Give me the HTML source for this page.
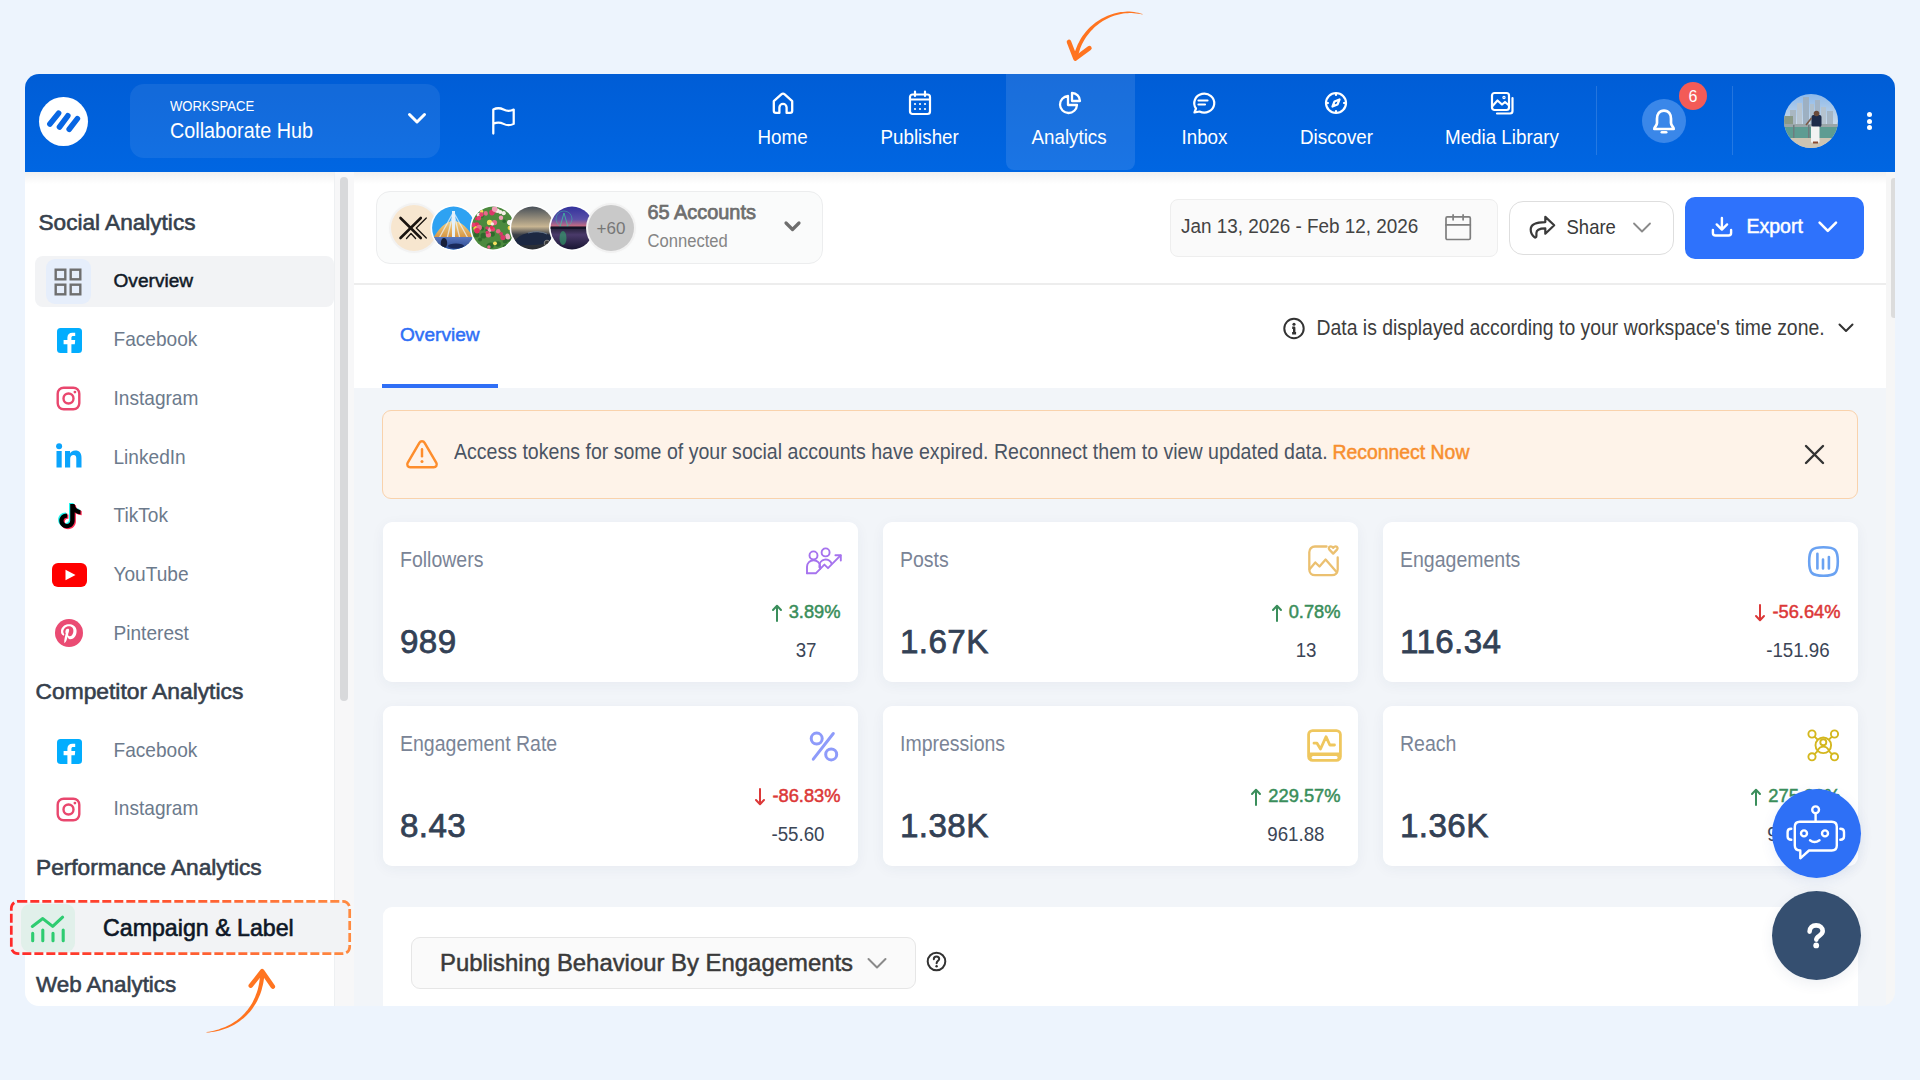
<!DOCTYPE html>
<html><head><meta charset="utf-8">
<style>
*{margin:0;padding:0;box-sizing:border-box}
html,body{width:1920px;height:1080px;overflow:hidden}
body{background:#EDF4FD;font-family:"Liberation Sans",sans-serif;position:relative}
.a{position:absolute}
.t{position:absolute;white-space:nowrap;line-height:1}
.m{-webkit-text-stroke:0.35px currentColor}
.s{transform:scaleY(1.1);transform-origin:0 84.65%}
svg{position:absolute;overflow:visible}
.av{position:absolute;width:46px;height:46px;border-radius:50%;border:2.5px solid #fff}
.card{background:#fff;border-radius:9px;box-shadow:0 3px 14px rgba(30,50,90,0.05)}
.rb{display:flex;justify-content:flex-end}
.rbi{text-align:center}
.pl{position:relative;top:1.5px;font-size:18.3px;line-height:1;white-space:nowrap;padding-left:17px;height:23px;display:inline-block}
.pl .arw{left:0;top:1px}
.sv{font-size:18.7px;line-height:1;color:#3B4556;white-space:nowrap;margin-top:17.5px;transform:scaleY(1.1);transform-origin:0 84.65%}
</style></head><body>

<!-- app container -->
<div class="a" style="left:25px;top:74px;width:1870px;height:932px;border-radius:14px;overflow:hidden;background:#fff">
  <!-- navbar -->
  <div class="a" style="left:0;top:0;width:1870px;height:98px;background:linear-gradient(#005DD6,#0066E2)"></div>
</div>

<!-- NAV CONTENT -->
<div id="nav">
  <!-- logo -->
  <div class="a" style="left:39px;top:96.5px;width:49px;height:49px;border-radius:50%;background:#fff"></div>
  <svg style="left:39px;top:96.5px" width="49" height="49" viewBox="0 0 49 49"><g stroke="#0866E3" stroke-width="5.6" stroke-linecap="round" fill="none">
    <path d="M10.9 27 L19.6 16.2"/><path d="M20.5 30 L28.8 18.8"/><path d="M30.2 32.2 L38.4 21.6"/></g></svg>
  <!-- workspace -->
  <div class="a" style="left:130px;top:84px;width:310px;height:74px;border-radius:14px;background:rgba(255,255,255,0.075)"></div>
  <div class="t" style="left:170px;top:100px;font-size:13.1px;color:#fff;transform:scaleY(1.14);transform-origin:0 84.7%">WORKSPACE</div>
  <div class="t s" style="left:170px;top:121.5px;font-size:19.8px;color:#fff">Collaborate Hub</div>
  <svg style="left:407px;top:112px" width="20" height="13" viewBox="0 0 20 13"><path d="M2.5 2.5 L10 10 L17.5 2.5" stroke="#fff" stroke-width="3" fill="none" stroke-linecap="round" stroke-linejoin="round"/></svg>
  <!-- flag -->
  <svg style="left:486.1px;top:101.8px" width="35" height="35" viewBox="0 0 24 24"><path d="M5 5.2 a7.5 7.5 0 0 1 7 0 a7.5 7.5 0 0 0 7 0 v9.8 a7.5 7.5 0 0 1 -7 0 a7.5 7.5 0 0 0 -7 0 Z M5 21.6 V15" stroke="#fff" stroke-width="1.55" fill="none" stroke-linecap="round" stroke-linejoin="round"/></svg>

  <!-- analytics highlight -->
  <div class="a" style="left:1006px;top:74px;width:129px;height:96px;border-radius:0 0 8px 8px;background:rgba(255,255,255,0.1)"></div>

  <!-- nav items -->
  <!-- home -->
  <svg style="left:771px;top:90.5px" width="24" height="24" viewBox="0 0 24 24"><path d="M2.8 10.2 L10.3 3.4 C11.3 2.5 12.7 2.5 13.7 3.4 L21.2 10.2 V19.8 C21.2 21 20.3 21.9 19.1 21.9 H15.6 V16.5 C15.6 14.5 14 12.9 12 12.9 C10 12.9 8.4 14.5 8.4 16.5 V21.9 H4.9 C3.7 21.9 2.8 21 2.8 19.8 Z" stroke="#fff" stroke-width="2.3" fill="none" stroke-linejoin="round"/></svg>
  <div class="t s" style="left:757.5px;top:129px;font-size:18.8px;color:#fff">Home</div>
  <!-- publisher -->
  <svg style="left:907.5px;top:89.5px" width="24" height="26" viewBox="0 0 24 26"><g stroke="#fff" stroke-width="2.2" fill="none" stroke-linecap="round"><rect x="2" y="4.5" width="20" height="19.5" rx="2.5"/><path d="M2 9.5 H22 M7 1.5 V6 M17 1.5 V6"/></g><g fill="#fff"><circle cx="7" cy="14" r="1.1"/><circle cx="12" cy="14" r="1.1"/><circle cx="17" cy="14" r="1.1"/><circle cx="7" cy="19" r="1.1"/><circle cx="12" cy="19" r="1.1"/><circle cx="17" cy="19" r="1.1"/></g></svg>
  <div class="t s" style="left:880.5px;top:129px;font-size:18.8px;color:#fff">Publisher</div>
  <!-- analytics -->
  <svg style="left:1057.5px;top:90.5px" width="24" height="24" viewBox="0 0 24 24"><g stroke="#fff" stroke-width="2.3" fill="none" stroke-linejoin="round"><path d="M10 5 A8.5 8.5 0 1 0 19 14 H10 Z"/><path d="M14 2 A8 8 0 0 1 22 10 H14 Z"/></g></svg>
  <div class="t s" style="left:1031.5px;top:129px;font-size:18.8px;color:#fff">Analytics</div>
  <!-- inbox -->
  <svg style="left:1191px;top:91px" width="24" height="24" viewBox="0 0 24 24"><g stroke="#fff" stroke-width="2.2" fill="none" stroke-linecap="round" stroke-linejoin="round"><path d="M3.5 21.5 L5 17.5 A10 9.5 0 1 1 8.5 20.5 Z"/><path d="M7.5 9.5 H16.5 M7.5 13.5 H14"/></g></svg>
  <div class="t s" style="left:1181.5px;top:129px;font-size:18.8px;color:#fff">Inbox</div>
  <!-- discover -->
  <svg style="left:1324px;top:91px" width="24" height="24" viewBox="0 0 24 24"><g stroke="#fff" stroke-width="2.2" fill="none" stroke-linecap="round" stroke-linejoin="round"><circle cx="12" cy="12" r="10"/><path d="M15.5 8.5 L13.5 13.5 L8.5 15.5 L10.5 10.5 Z"/><path d="M12 2.5 V4 M12 20 V21.5 M2.5 12 H4 M20 12 H21.5"/></g></svg>
  <div class="t s" style="left:1300px;top:129px;font-size:18.8px;color:#fff">Discover</div>
  <!-- media library -->
  <svg style="left:1490px;top:90.5px" width="25" height="25" viewBox="0 0 25 25"><g stroke="#fff" stroke-width="2.2" fill="none" stroke-linecap="round" stroke-linejoin="round"><rect x="2" y="2" width="17" height="17" rx="2.5"/><path d="M22.5 7 V20 a2.5 2.5 0 0 1 -2.5 2.5 H7"/><path d="M2.5 15 L7.5 9.5 L12 13.5 L15 11 L18.5 14"/><circle cx="14" cy="6.5" r="0.6"/></g></svg>
  <div class="t s" style="left:1445px;top:129px;font-size:18.8px;color:#fff">Media Library</div>

  <!-- dividers -->
  <div class="a" style="left:1596px;top:86px;width:1px;height:69px;background:rgba(255,255,255,0.14)"></div>
  <div class="a" style="left:1732px;top:86px;width:1px;height:69px;background:rgba(255,255,255,0.14)"></div>
  <!-- bell -->
  <div class="a" style="left:1642px;top:99px;width:44px;height:44px;border-radius:50%;background:#3A87E9"></div>
  <svg style="left:1651px;top:107.5px" width="26" height="28" viewBox="0 0 24 26"><g stroke="#fff" stroke-width="2.5" fill="none" stroke-linecap="round" stroke-linejoin="round"><path d="M12 2.5 C7.5 2.5 5.5 6 5.5 10 V14 C5.5 16.5 3 17.5 3 19.5 H21 C21 17.5 18.5 16.5 18.5 14 V10 C18.5 6 16.5 2.5 12 2.5 Z"/><path d="M10 22.5 H14"/></g></svg>
  <div class="a" style="left:1679px;top:82px;width:28px;height:28px;border-radius:50%;background:#F35B57"></div>
  <div class="t" style="left:1679px;top:89px;width:28px;text-align:center;font-size:16px;color:#fff">6</div>
  <!-- avatar -->
  <svg style="left:1784px;top:94px" width="54" height="54" viewBox="0 0 54 54"><defs><clipPath id="avc"><circle cx="27" cy="27" r="27"/></clipPath><linearGradient id="sky" x1="0" y1="0" x2="0" y2="1"><stop offset="0" stop-color="#8DB9EA"/><stop offset="0.55" stop-color="#C9DAEA"/></linearGradient></defs>
    <g clip-path="url(#avc)">
      <rect width="54" height="54" fill="url(#sky)"/>
      <rect x="6" y="16" width="6" height="16" fill="#A9B7C2"/><rect x="13" y="9" width="5" height="23" fill="#B8C5D0"/><rect x="19" y="3" width="6" height="29" fill="#9DB0C2"/><rect x="26" y="10" width="4" height="22" fill="#AFC0CE"/><rect x="31" y="6" width="5" height="26" fill="#A2B4C6"/><rect x="37" y="13" width="5" height="19" fill="#B5C3CF"/><rect x="43" y="17" width="6" height="15" fill="#A6B6C4"/>
      <rect x="0" y="22" width="9" height="12" fill="#8A9A88"/>
      <rect x="0" y="30" width="54" height="4" fill="#9AA6A8"/>
      <rect x="0" y="33" width="54" height="12" fill="#5E9C92"/>
      <rect x="0" y="44" width="54" height="10" fill="#CDC4B2"/>
      <rect x="9" y="31" width="1.5" height="13" fill="#6E7C7E"/><rect x="24" y="31" width="1.5" height="13" fill="#6E7C7E"/>
      <rect x="27.5" y="21" width="10" height="12" rx="2" fill="#1D2B4A"/>
      <rect x="27" y="32.5" width="8.5" height="16" fill="#F2F2F2"/>
      <circle cx="32.5" cy="19.5" r="2.8" fill="#6A4A3A"/>
      <path d="M27.5 24 L22 31" stroke="#7A5A48" stroke-width="1.6"/>
      <rect x="29" y="47.5" width="5" height="2" fill="#8A4A30"/>
    </g></svg>
  <!-- dots -->
  <div class="a" style="left:1866.5px;top:111.8px;width:5px;height:5px;border-radius:50%;background:#fff"></div>
  <div class="a" style="left:1866.5px;top:118.5px;width:5px;height:5px;border-radius:50%;background:#fff"></div>
  <div class="a" style="left:1866.5px;top:125.2px;width:5px;height:5px;border-radius:50%;background:#fff"></div>
</div>

<!-- SIDEBAR -->
<div id="sidebar">
  <!-- nav shadow -->
  <div class="a" style="left:25px;top:172px;width:1870px;height:12px;background:linear-gradient(rgba(0,0,0,0.06),rgba(0,0,0,0))"></div>
  <!-- sidebar border + scrollbar -->
  <div class="a" style="left:334px;top:172px;width:1px;height:834px;background:#EEF0F2"></div>
  <div class="a" style="left:335px;top:172px;width:19px;height:834px;background:#F7F7F8"></div>
  <div class="a" style="left:340px;top:177px;width:8px;height:524px;border-radius:4px;background:#D8D9DB"></div>

  <div class="t m" style="left:38.5px;top:212px;font-size:22.6px;color:#36404C;-webkit-text-stroke:0.6px #36404C">Social Analytics</div>
  <!-- overview active -->
  <div class="a" style="left:35px;top:256px;width:299px;height:51px;border-radius:8px;background:#F2F3F5"></div>
  <div class="a" style="left:46px;top:259px;width:45px;height:45px;border-radius:9px;background:#E6EEFB"></div>
  <svg style="left:54px;top:267.5px" width="29" height="29" viewBox="0 0 29 29"><g stroke="#6F6F6F" stroke-width="2.4" fill="none"><rect x="1.7" y="1.7" width="9.6" height="9.6"/><rect x="16.7" y="1.7" width="9.6" height="9.6"/><rect x="1.7" y="16.7" width="9.6" height="9.6"/><rect x="16.7" y="16.7" width="9.6" height="9.6"/></g></svg>
  <div class="t m" style="left:113.5px;top:271px;font-size:19.1px;color:#111A27;-webkit-text-stroke:0.5px #111A27">Overview</div>

  <!-- facebook -->
  <svg style="left:56.5px;top:327.5px" width="25" height="25" viewBox="0 0 25 25"><rect width="25" height="25" rx="3.5" fill="#02ADFE"/><path d="M10.4 25 V16.2 H6.6 V12.1 H10.4 V9.4 C10.4 6.3 12.4 4.7 15.4 4.7 H18.2 V8 H16.3 C15 8 14.4 8.6 14.4 9.8 V12.1 H18.2 L17.8 16.2 H14.4 V25 Z" fill="#fff"/></svg>
  <div class="t s" style="left:113.5px;top:330px;font-size:19.1px;color:#6C7A8C">Facebook</div>
  <!-- instagram -->
  <svg style="left:56px;top:385.5px" width="25" height="25" viewBox="0 0 25 25"><g stroke="#E9476E" stroke-width="2.4" fill="none"><rect x="1.7" y="1.7" width="21.6" height="21.6" rx="6"/><circle cx="12.5" cy="12.5" r="5"/></g><circle cx="18.9" cy="6.1" r="1.4" fill="#E9476E"/></svg>
  <div class="t s" style="left:113.5px;top:389px;font-size:19.1px;color:#6C7A8C">Instagram</div>
  <!-- linkedin -->
  <svg style="left:56px;top:443px" width="26" height="25" viewBox="0 0 26 25"><g fill="#0BA4FC"><circle cx="3.1" cy="3.3" r="3"/><rect x="0.5" y="8" width="5.2" height="16.5"/><path d="M9 8 H14 V10.4 C14.8 9 16.6 7.6 19.3 7.6 C23.6 7.6 25.5 10.3 25.5 14.8 V24.5 H20.3 V15.8 C20.3 13.6 19.8 11.9 17.6 11.9 C15.4 11.9 14.2 13.6 14.2 15.8 V24.5 H9 Z"/></g></svg>
  <div class="t s" style="left:113.5px;top:448px;font-size:19.1px;color:#6C7A8C">LinkedIn</div>
  <!-- tiktok -->
  <svg style="left:55.5px;top:501.5px" width="27" height="28" viewBox="0 0 27 28">
    <path d="M14.2 2 H18.6 C18.9 5.5 21 7.6 24.5 7.9 V12.2 C22.2 12.2 20.3 11.5 18.7 10.3 V18.6 C18.7 23 15.2 26.3 10.9 26.3 C6.6 26.3 3.3 23 3.3 18.8 C3.3 14.5 6.8 11.3 11.2 11.5 V15.8 C9.2 15.5 7.6 16.9 7.6 18.8 C7.6 20.6 9.1 22 10.9 22 C12.8 22 14.2 20.6 14.2 18.6 Z" fill="#25F4EE" transform="translate(-1.2,-1)"/>
    <path d="M14.2 2 H18.6 C18.9 5.5 21 7.6 24.5 7.9 V12.2 C22.2 12.2 20.3 11.5 18.7 10.3 V18.6 C18.7 23 15.2 26.3 10.9 26.3 C6.6 26.3 3.3 23 3.3 18.8 C3.3 14.5 6.8 11.3 11.2 11.5 V15.8 C9.2 15.5 7.6 16.9 7.6 18.8 C7.6 20.6 9.1 22 10.9 22 C12.8 22 14.2 20.6 14.2 18.6 Z" fill="#FE2C55" transform="translate(1.2,1)"/>
    <path d="M14.2 2 H18.6 C18.9 5.5 21 7.6 24.5 7.9 V12.2 C22.2 12.2 20.3 11.5 18.7 10.3 V18.6 C18.7 23 15.2 26.3 10.9 26.3 C6.6 26.3 3.3 23 3.3 18.8 C3.3 14.5 6.8 11.3 11.2 11.5 V15.8 C9.2 15.5 7.6 16.9 7.6 18.8 C7.6 20.6 9.1 22 10.9 22 C12.8 22 14.2 20.6 14.2 18.6 Z" fill="#000"/></svg>
  <div class="t s" style="left:113.5px;top:506px;font-size:19.1px;color:#6C7A8C">TikTok</div>
  <!-- youtube -->
  <svg style="left:51.5px;top:562.5px" width="35" height="24" viewBox="0 0 35 24"><rect width="35" height="24" rx="6" fill="#FF0000"/><path d="M13.5 6.8 L23.5 12 L13.5 17.2 Z" fill="#fff"/></svg>
  <div class="t s" style="left:113.5px;top:565px;font-size:19.1px;color:#6C7A8C">YouTube</div>
  <!-- pinterest -->
  <svg style="left:54.5px;top:618.5px" width="28" height="28" viewBox="0 0 28 28"><circle cx="14" cy="14" r="14" fill="#EA4B73"/><path d="M12.6 17.4 C12 20.2 11.3 22.8 9.4 24.3 C8.8 20.3 10.2 17.3 10.8 14.2 C9.8 12.4 11 8.9 13.3 9.8 C16.1 10.9 10.9 16.6 14.4 17.3 C18.1 18 19.6 10.9 17.3 8.6 C14 5.2 7.6 8.5 8.4 13.4 C8.6 14.6 9.9 15 8.9 16.7 C6.6 16.2 5.9 14.5 6 12.1 C6.1 8.3 9.4 5.6 12.8 5.2 C17 4.8 21 6.8 21.5 10.9 C22.1 15.5 19.5 20.5 14.9 20.2 C13.6 20.1 13.1 19.4 12.6 17.4 Z" fill="#fff"/></svg>
  <div class="t s" style="left:113.5px;top:623.5px;font-size:19.1px;color:#6C7A8C">Pinterest</div>

  <div class="t m" style="left:35.5px;top:680px;font-size:22.8px;color:#36404C;-webkit-text-stroke:0.6px #36404C">Competitor Analytics</div>
  <svg style="left:56.5px;top:738.5px" width="25" height="25" viewBox="0 0 25 25"><rect width="25" height="25" rx="3.5" fill="#02ADFE"/><path d="M10.4 25 V16.2 H6.6 V12.1 H10.4 V9.4 C10.4 6.3 12.4 4.7 15.4 4.7 H18.2 V8 H16.3 C15 8 14.4 8.6 14.4 9.8 V12.1 H18.2 L17.8 16.2 H14.4 V25 Z" fill="#fff"/></svg>
  <div class="t s" style="left:113.5px;top:741px;font-size:19.1px;color:#6C7A8C">Facebook</div>
  <svg style="left:56px;top:796.5px" width="25" height="25" viewBox="0 0 25 25"><g stroke="#E9476E" stroke-width="2.4" fill="none"><rect x="1.7" y="1.7" width="21.6" height="21.6" rx="6"/><circle cx="12.5" cy="12.5" r="5"/></g><circle cx="18.9" cy="6.1" r="1.4" fill="#E9476E"/></svg>
  <div class="t s" style="left:113.5px;top:799px;font-size:19.1px;color:#6C7A8C">Instagram</div>

  <div class="t m" style="left:36px;top:856px;font-size:22.7px;color:#36404C;-webkit-text-stroke:0.6px #36404C">Performance Analytics</div>
  <!-- campaign & label highlighted -->
  <div class="a" style="left:12px;top:902px;width:337px;height:51px;border-radius:7px;background:#F2F3F5"></div>
  <div class="a" style="left:20.5px;top:903.5px;width:54.5px;height:48px;border-radius:9px;background:#E1F0EA"></div>
  <svg style="left:0;top:880px" width="100" height="80" viewBox="0 880 100 80"><g stroke="#2ECC71" stroke-width="3.1" fill="none" stroke-linecap="round" stroke-linejoin="round"><path d="M32.3 926.4 L42.8 918.6 L52.7 926.4 L62.6 917.2"/><path d="M32.7 933.2 V940.8 M42.8 930 V940.8 M53 933.2 V940.8 M63.2 930 V940.8"/></g></svg>
  <div class="t m" style="left:103px;top:917px;font-size:23.2px;color:#0E1726;-webkit-text-stroke:0.6px #0E1726">Campaign &amp; Label</div>
  <svg style="left:10px;top:900px" width="341" height="55" viewBox="0 0 341 55"><defs><linearGradient id="dg" x1="0" x2="1"><stop offset="0" stop-color="#FF2A2A"/><stop offset="0.5" stop-color="#FF5A30"/><stop offset="1" stop-color="#FF8A40"/></linearGradient></defs><rect x="1.3" y="1.3" width="338.4" height="52.4" rx="7" fill="none" stroke="url(#dg)" stroke-width="2.7" stroke-dasharray="9 3"/></svg>

  <div class="t m" style="left:36px;top:973.5px;font-size:22.4px;color:#36404C;-webkit-text-stroke:0.6px #36404C">Web Analytics</div>
</div>

<!-- CONTENT -->
<div id="content">
  <!-- gray content bg -->
  <div class="a" style="left:354px;top:387.5px;width:1532px;height:618.5px;background:#F2F5F9"></div>
  <!-- right scrollbar -->
  <div class="a" style="left:1886px;top:172px;width:9px;height:834px;background:#F6F6F6"></div>
  <div class="a" style="left:1891px;top:178px;width:4px;height:140px;border-radius:3px 0 0 3px;background:#DCDCDC"></div>
  <!-- header divider -->
  <div class="a" style="left:354px;top:283px;width:1532px;height:1.5px;background:#EDEDED"></div>

  <!-- accounts box -->
  <div class="a" style="left:376px;top:190.5px;width:446.5px;height:73.5px;border-radius:14px;background:#FAFBFB;border:1px solid #ECEDEE"></div>
  <div class="a av" style="left:391px;top:205px;background:#F7E6CF;border:0;box-shadow:0 0 0 2px #F2F2F2,0 0 4px rgba(0,0,0,0.06)"></div>
  <svg style="left:391px;top:205px" width="46" height="46" viewBox="391 205 46 46"><g stroke="#1A1410" fill="none" stroke-linecap="round" stroke-linejoin="round"><path d="M400.5 218 L420.8 238 M420.8 218 L400.5 238" stroke-width="2.6"/><path d="M426.3 218 L416.3 228 L426.3 238" stroke-width="1.3"/><path d="M406.5 238.5 L411 233.5 L415.6 238.5" stroke-width="1.3"/></g></svg>
  <svg style="left:0;top:0" width="1920" height="400" viewBox="0 0 1920 400"><defs>
    <clipPath id="c2"><circle cx="453.5" cy="228" r="21.4"/></clipPath><clipPath id="c3"><circle cx="493" cy="228" r="21.4"/></clipPath><clipPath id="c4"><circle cx="532.5" cy="228" r="21.4"/></clipPath><clipPath id="c5"><circle cx="572" cy="228" r="21.4"/></clipPath>
    <linearGradient id="dome" x1="0" y1="0" x2="0" y2="1"><stop offset="0" stop-color="#F4D48A"/><stop offset="0.6" stop-color="#D99A48"/><stop offset="1" stop-color="#8A7A70"/></linearGradient>
    <linearGradient id="water" x1="0" y1="0" x2="0" y2="1"><stop offset="0" stop-color="#5A78C0"/><stop offset="1" stop-color="#1C3A80"/></linearGradient>
    <linearGradient id="carsky" x1="0" y1="0" x2="0" y2="1"><stop offset="0" stop-color="#3E4854"/><stop offset="0.45" stop-color="#C8B592"/><stop offset="0.62" stop-color="#3A3F48"/><stop offset="1" stop-color="#24272C"/></linearGradient>
    <linearGradient id="fsky" x1="0" y1="0" x2="0" y2="1"><stop offset="0" stop-color="#2E2E9A"/><stop offset="0.3" stop-color="#5A50A8"/><stop offset="0.44" stop-color="#C86C80"/><stop offset="0.5" stop-color="#2A2440"/><stop offset="0.62" stop-color="#4A3A6A"/><stop offset="1" stop-color="#0C0C24"/></linearGradient>
  </defs>
  <circle cx="453.5" cy="228" r="23" fill="#fff"/>
  <g clip-path="url(#c2)">
    <rect x="430" y="205" width="48" height="48" fill="#2FA2F2"/>
    <path d="M429 246 Q453.5 196 478 246 Z" fill="url(#dome)"/>
    <g stroke="#EAF2FA" stroke-width="1.3" opacity="0.75"><path d="M453.5 212 L437 242 M453.5 212 L446 243 M453.5 212 L461 243 M453.5 212 L470 242"/></g>
    <rect x="452" y="211" width="3" height="28" fill="#E4F0FA"/>
    <rect x="430" y="237" width="48" height="16" fill="url(#water)"/>
    <ellipse cx="444" cy="243" rx="3.2" ry="5" fill="#18203A"/>
    <ellipse cx="456" cy="246" rx="8" ry="2.5" fill="#1A2A5A"/>
  </g>
  <circle cx="493" cy="228" r="23" fill="#fff"/>
  <g clip-path="url(#c3)">
    <rect x="470" y="205" width="48" height="48" fill="#4C8A3E"/>
    <circle cx="504.2" cy="221.2" r="1.8" fill="#2E6A2C"/><circle cx="505.5" cy="247.4" r="2.8" fill="#2E6A2C"/><circle cx="505.2" cy="240.7" r="2.6" fill="#2E6A2C"/><circle cx="482.1" cy="228.7" r="2.0" fill="#2E6A2C"/><circle cx="474.2" cy="209.1" r="1.9" fill="#2E6A2C"/><circle cx="483.4" cy="235.7" r="2.9" fill="#2E6A2C"/><circle cx="490.9" cy="245.5" r="3.0" fill="#2E6A2C"/><circle cx="511.2" cy="222.6" r="1.8" fill="#2E6A2C"/><circle cx="482.1" cy="215.9" r="1.8" fill="#2E6A2C"/><circle cx="498.0" cy="244.0" r="2.8" fill="#2E6A2C"/><circle cx="492.2" cy="234.1" r="2.7" fill="#2E6A2C"/><circle cx="476.4" cy="234.4" r="2.9" fill="#2E6A2C"/><circle cx="504.3" cy="238.0" r="2.2" fill="#2E6A2C"/><circle cx="480.1" cy="239.6" r="2.0" fill="#2E6A2C"/><circle cx="505.0" cy="246.9" r="2.1" fill="#2E6A2C"/><circle cx="489.1" cy="245.9" r="2.6" fill="#2E6A2C"/><circle cx="479.8" cy="213.1" r="1.7" fill="#2E6A2C"/><circle cx="509.2" cy="240.3" r="1.7" fill="#2E6A2C"/><circle cx="506.1" cy="247.2" r="2.5" fill="#2E6A2C"/><circle cx="487.0" cy="229.9" r="1.7" fill="#2E6A2C"/><circle cx="486.0" cy="214.0" r="1.7" fill="#E86A8A"/><circle cx="494.4" cy="222.6" r="2.7" fill="#E86A8A"/><circle cx="481.6" cy="211.4" r="1.7" fill="#F7E060"/><circle cx="476.6" cy="225.0" r="2.7" fill="#E0305A"/><circle cx="498.2" cy="231.3" r="2.3" fill="#E86A8A"/><circle cx="488.9" cy="247.1" r="1.8" fill="#E86A8A"/><circle cx="489.8" cy="229.6" r="2.3" fill="#F0A0B8"/><circle cx="500.3" cy="212.1" r="2.0" fill="#F5F0E8"/><circle cx="494.9" cy="210.5" r="2.3" fill="#E86A8A"/><circle cx="492.9" cy="229.3" r="2.2" fill="#E84070"/><circle cx="509.9" cy="222.5" r="2.6" fill="#F5F0E8"/><circle cx="501.0" cy="217.8" r="2.2" fill="#F0A0B8"/><circle cx="508.0" cy="237.2" r="2.3" fill="#F0A0B8"/><circle cx="475.9" cy="228.5" r="2.5" fill="#F2D040"/><circle cx="479.1" cy="227.6" r="2.8" fill="#E86A8A"/><circle cx="476.1" cy="230.3" r="2.0" fill="#E84070"/><circle cx="487.0" cy="227.9" r="1.7" fill="#D8386A"/><circle cx="476.7" cy="218.8" r="1.7" fill="#E0305A"/><circle cx="501.1" cy="233.9" r="1.9" fill="#D8386A"/><circle cx="488.4" cy="234.7" r="2.7" fill="#E86A8A"/><circle cx="487.2" cy="232.4" r="1.7" fill="#D8386A"/><circle cx="503.7" cy="213.2" r="2.1" fill="#F5F0E8"/><circle cx="509.7" cy="227.9" r="2.1" fill="#F2D040"/><circle cx="495.0" cy="243.3" r="1.9" fill="#F7E060"/><circle cx="489.6" cy="222.4" r="2.7" fill="#F7E060"/><circle cx="479.0" cy="215.0" r="2.4" fill="#F5F0E8"/><circle cx="473.5" cy="241.2" r="1.9" fill="#F2D040"/><circle cx="473.2" cy="224.8" r="2.3" fill="#E84070"/><circle cx="485.7" cy="213.0" r="2.1" fill="#E86A8A"/><circle cx="507.8" cy="246.1" r="2.1" fill="#4A58C8"/><circle cx="492.3" cy="224.0" r="1.7" fill="#F5F0E8"/><circle cx="481.4" cy="214.5" r="2.3" fill="#E84070"/><circle cx="477.1" cy="230.7" r="2.7" fill="#E0305A"/><circle cx="497.5" cy="210.8" r="2.3" fill="#F5F0E8"/><circle cx="478.9" cy="218.1" r="2.3" fill="#E84070"/><circle cx="492.0" cy="212.6" r="2.8" fill="#D8386A"/><circle cx="491.6" cy="227.4" r="1.8" fill="#E0305A"/><circle cx="503.0" cy="237.6" r="2.6" fill="#D8386A"/><circle cx="479.5" cy="208.9" r="1.8" fill="#E84070"/><circle cx="494.7" cy="209.1" r="2.8" fill="#F0A0B8"/><circle cx="507.5" cy="235.8" r="2.2" fill="#F0A0B8"/><circle cx="509.3" cy="222.2" r="2.2" fill="#F5F0E8"/>
  </g>
  <circle cx="532.5" cy="228" r="23" fill="#fff"/>
  <g clip-path="url(#c4)">
    <rect x="510" y="205" width="48" height="48" fill="url(#carsky)"/>
    <path d="M514 242 Q518 235 528 233 Q539 230 550 235 L555 242 Q540 246 514 245 Z" fill="#1C2842"/>
    <path d="M528 233 Q539 230 547 234" stroke="#6A7A90" stroke-width="0.9" fill="none"/>
    <circle cx="547" cy="243" r="2.8" fill="#3A3A3A" stroke="#8A8A8A" stroke-width="0.9"/>
    <path d="M536 252 L556 243" stroke="#8A8A8A" stroke-width="0.8"/>
  </g>
  <circle cx="572" cy="228" r="23" fill="#fff"/>
  <g clip-path="url(#c5)">
    <rect x="549" y="205" width="48" height="48" fill="url(#fsky)"/>
    <circle cx="564" cy="219" r="8" stroke="#3FBFA8" stroke-width="0.9" fill="none" opacity="0.55"/>
    <path d="M560 227 L564 213 L568 227" stroke="#3FD0A0" stroke-width="1" fill="none" opacity="0.7"/>
    <rect x="549" y="226.5" width="48" height="2.5" fill="#141428"/>
    <ellipse cx="563" cy="238" rx="3.5" ry="7" fill="#30C070" opacity="0.5"/>
  </g>
  </svg>
  <div class="a av" style="left:588px;top:205px;width:46px;background:#C9C9C9;border:0;box-shadow:0 0 0 2px #F1F1F1,0 0 4px rgba(0,0,0,0.06)"></div>
  <div class="t" style="left:588px;top:219.5px;width:46px;text-align:center;font-size:17px;color:#777">+60</div>
  <div class="t m" style="left:647.5px;top:203px;font-size:19.9px;color:#6E6E6E;-webkit-text-stroke:0.75px #6E6E6E">65 Accounts</div>
  <div class="t s" style="left:647.5px;top:234px;font-size:16.6px;color:#858585">Connected</div>
  <svg style="left:783px;top:220px" width="19" height="14" viewBox="0 0 19 14"><path d="M3 3 L9.5 9.5 L16 3" stroke="#6E6E6E" stroke-width="3.2" fill="none" stroke-linecap="round" stroke-linejoin="round"/></svg>

  <!-- date box -->
  <div class="a" style="left:1169.5px;top:199px;width:328px;height:58px;border-radius:8px;background:#FAFAFA;border:1px solid #EEEEEE"></div>
  <div class="t s" style="left:1181px;top:218px;font-size:18.9px;color:#434343">Jan 13, 2026 - Feb 12, 2026</div>
  <svg style="left:1444px;top:213.5px" width="28" height="28" viewBox="0 0 28 28"><g stroke="#7E7E7E" stroke-width="1.7" fill="none" stroke-linecap="round"><rect x="2" y="2.9" width="24.3" height="22.6" rx="1.3"/><path d="M2 10.9 H26.3 M9.1 0.9 V5.8 M19.1 0.9 V5.8"/></g></svg>
  <!-- share -->
  <div class="a" style="left:1508.5px;top:201px;width:165.5px;height:54px;border-radius:14px;background:#fff;border:1px solid #DEDEDE"></div>
  <svg style="left:0;top:0" width="1920" height="300" viewBox="0 0 1920 300"><path d="M1545.3 216.9 L1554.2 225.3 L1545.3 233.7 V228.4 C1540 228.4 1536.4 229.6 1536.4 233 V236 C1536.4 237.4 1535.3 237.9 1534.4 237.2 C1531.6 235 1530.7 232.2 1530.7 229.6 C1530.7 225 1535 222.1 1545.3 222.1 Z" stroke="#3A3A3A" stroke-width="2.2" fill="none" stroke-linejoin="round"/></svg>
  <div class="t s" style="left:1566.5px;top:218.5px;font-size:18.5px;color:#393939">Share</div>
  <svg style="left:1632px;top:221px" width="20" height="13" viewBox="0 0 20 13"><path d="M2 2.5 L10 10.5 L18 2.5" stroke="#8A8A8A" stroke-width="1.8" fill="none" stroke-linecap="round" stroke-linejoin="round"/></svg>
  <!-- export -->
  <div class="a" style="left:1685px;top:197px;width:179px;height:61.5px;border-radius:10px;background:#2E72FC"></div>
  <svg style="left:0;top:0" width="1920" height="300" viewBox="0 0 1920 300"><g stroke="#fff" stroke-width="2.4" fill="none" stroke-linecap="round" stroke-linejoin="round"><path d="M1721.9 218 V229.3 M1716.7 224.4 L1721.9 229.6 L1727.1 224.4"/><path d="M1712.9 229.9 V232.9 Q1712.9 235.5 1715.5 235.5 H1728.5 Q1731.1 235.5 1731.1 232.9 V229.9"/></g><path d="M1819.6 222.6 L1827.8 230.8 L1836 222.6" stroke="#fff" stroke-width="2.6" fill="none" stroke-linecap="round" stroke-linejoin="round"/></svg>
  <div class="t m" style="left:1746.5px;top:217.3px;font-size:19.5px;color:#fff;-webkit-text-stroke:0.5px #fff">Export</div>
  

  <!-- tabs -->
  <div class="t m" style="left:400px;top:325px;font-size:19.1px;color:#2F6FF6;-webkit-text-stroke:0.5px #2F6FF6">Overview</div>
  <div class="a" style="left:382px;top:383.5px;width:116px;height:4px;background:#2F6FF6"></div>
  <svg style="left:1282px;top:317px" width="24" height="24" viewBox="0 0 24 24"><circle cx="12" cy="11.5" r="9.7" stroke="#333" stroke-width="2" fill="none"/><circle cx="12" cy="7.2" r="1.55" fill="#333"/><path d="M10.2 10.7 H12.2 V15.9 M10.1 16.2 H14.1" stroke="#333" stroke-width="2.4" fill="none" stroke-linejoin="round"/></svg>
  <div class="t s" style="left:1316.5px;top:318.5px;font-size:19.4px;color:#3D3D3D">Data is displayed according to your workspace's time zone.</div>
  <svg style="left:1837px;top:321px" width="18" height="14" viewBox="0 0 18 14"><path d="M2.5 3.5 L9 10 L15.5 3.5" stroke="#333" stroke-width="2" fill="none" stroke-linecap="round" stroke-linejoin="round"/></svg>

  <!-- alert -->
  <div class="a" style="left:382px;top:410px;width:1476px;height:88.5px;border-radius:9px;background:#FEF3E9;border:1.5px solid #F9D2AC"></div>
  <svg style="left:404px;top:438px" width="36" height="32" viewBox="-1.1 -0.95 38.2 33.9"><g stroke="#FD8D2C" stroke-width="2.6" fill="none" stroke-linecap="round" stroke-linejoin="round"><path d="M15.2 4.2 C16.5 2 19.5 2 20.8 4.2 L33.2 25.5 C34.5 27.7 33 30 30.5 30 H5.5 C3 30 1.5 27.7 2.8 25.5 Z"/><path d="M18 11 V18.5"/></g><circle cx="18" cy="24" r="1.6" fill="#FD8D2C"/></svg>
  <div class="t s" style="left:454px;top:442.5px;font-size:19.56px;color:#4A5463">Access tokens for some of your social accounts have expired. Reconnect them to view updated data.</div>
  <div class="t m" style="left:1332.5px;top:442.5px;font-size:19.4px;color:#F78F2F;-webkit-text-stroke:0.5px #F78F2F">Reconnect Now</div>
  <svg style="left:1803px;top:443px" width="23" height="23" viewBox="0 0 23 23"><path d="M3 3 L20 20 M20 3 L3 20" stroke="#333" stroke-width="2.4" stroke-linecap="round"/></svg>

  <div id="cards">
  <div class="a card" style="left:382.5px;top:522px;width:475.5px;height:160px"></div>
  <div class="t s" style="left:400.0px;top:550.5px;font-size:19.5px;color:#7A8496">Followers</div>
  <div class="t" style="left:400.0px;top:625px;font-size:33.2px;font-weight:400;-webkit-text-stroke:0.75px #334155;color:#334155;letter-spacing:0.4px">989</div>
  <svg style="left:806px;top:547px" width="36" height="28" viewBox="0 0 36 28"><g stroke="#A673EE" stroke-width="1.9" fill="none" stroke-linejoin="round" stroke-linecap="round"><circle cx="7.5" cy="8.4" r="4"/><circle cx="19.6" cy="5.4" r="4"/><path d="M1 26.3 V19.8 A6.6 6.6 0 0 1 14.2 19.8 V22"/><path d="M13.4 20.2 V18.8 A6.3 6.3 0 0 1 25.6 16.6"/><path d="M1 26.3 H9.8 L18.4 17.6 L22 21.2 L34.6 8.4"/><path d="M29.4 8.2 H34.8 V13.6"/></g></svg>
  <div class="a rb" style="left:382.5px;top:601px;width:458px"><div class="rbi"><div class="pl" style="color:#3A8E5B"><svg class="arw" width="10" height="18" viewBox="0 0 10 18"><g stroke="#3A8E5B" stroke-width="2" fill="none" stroke-linecap="round" stroke-linejoin="round"><path d="M5 17 V2 M1 6 L5 1.8 L9 6"/></g></svg><span class="m" style="-webkit-text-stroke:0.5px currentColor">3.89%</span></div><div class="sv">37</div></div></div>
  <div class="a card" style="left:882.5px;top:522px;width:475.5px;height:160px"></div>
  <div class="t s" style="left:900.0px;top:550.5px;font-size:19.5px;color:#7A8496">Posts</div>
  <div class="t" style="left:900.0px;top:625px;font-size:33.2px;font-weight:400;-webkit-text-stroke:0.75px #334155;color:#334155;letter-spacing:0.4px">1.67K</div>
  <svg style="left:1307px;top:544px" width="34" height="34" viewBox="0 0 34 34"><g stroke="#EBC070" stroke-width="2.3" fill="none" stroke-linecap="round" stroke-linejoin="round"><path d="M19.5 2.5 H8 C4.7 2.5 2.3 4.9 2.3 8.2 V25.5 C2.3 28.8 4.7 31.2 8 31.2 H25 C28.3 31.2 30.7 28.8 30.7 25.5 V13.5"/><path d="M2.8 25 L8.3 18.5 L12.5 22.5 L18.6 15.5 L30 28.5"/><path d="M26.2 9.6 L22.4 5.6 C21.2 4.3 22 2.3 23.7 2.3 C24.6 2.3 25.4 2.8 26.2 3.8 C27 2.8 27.8 2.3 28.7 2.3 C30.4 2.3 31.2 4.3 30 5.6 Z"/></g></svg>
  <div class="a rb" style="left:882.5px;top:601px;width:458px"><div class="rbi"><div class="pl" style="color:#3A8E5B"><svg class="arw" width="10" height="18" viewBox="0 0 10 18"><g stroke="#3A8E5B" stroke-width="2" fill="none" stroke-linecap="round" stroke-linejoin="round"><path d="M5 17 V2 M1 6 L5 1.8 L9 6"/></g></svg><span class="m" style="-webkit-text-stroke:0.5px currentColor">0.78%</span></div><div class="sv">13</div></div></div>
  <div class="a card" style="left:1382.5px;top:522px;width:475.5px;height:160px"></div>
  <div class="t s" style="left:1400.0px;top:550.5px;font-size:19.5px;color:#7A8496">Engagements</div>
  <div class="t" style="left:1400.0px;top:625px;font-size:33.2px;font-weight:400;-webkit-text-stroke:0.75px #334155;color:#334155;letter-spacing:0.4px">116.34</div>
  <svg style="left:1807px;top:544.5px" width="33" height="33" viewBox="0 0 33 33"><g stroke="#6AA2F2" stroke-width="2.6" fill="none" stroke-linecap="round"><path d="M16.5 2.2 C28.2 2.2 30.8 4.8 30.8 16.5 C30.8 28.2 28.2 30.8 16.5 30.8 C4.8 30.8 2.2 28.2 2.2 16.5 C2.2 4.8 4.8 2.2 16.5 2.2 Z"/><path d="M10.4 8.8 V23.4 M16 14.5 V23.4 M21.9 12 V23.4"/></g></svg>
  <div class="a rb" style="left:1382.5px;top:601px;width:458px"><div class="rbi"><div class="pl" style="color:#DC3838"><svg class="arw" width="10" height="18" viewBox="0 0 10 18"><g stroke="#DC3838" stroke-width="2" fill="none" stroke-linecap="round" stroke-linejoin="round"><path d="M5 1 V16 M1 12 L5 16.2 L9 12"/></g></svg><span class="m" style="-webkit-text-stroke:0.5px currentColor">-56.64%</span></div><div class="sv">-151.96</div></div></div>
  <div class="a card" style="left:382.5px;top:706px;width:475.5px;height:160px"></div>
  <div class="t s" style="left:400.0px;top:734.5px;font-size:19.5px;color:#7A8496">Engagement Rate</div>
  <div class="t" style="left:400.0px;top:809px;font-size:33.2px;font-weight:400;-webkit-text-stroke:0.75px #334155;color:#334155;letter-spacing:0.4px">8.43</div>
  <svg style="left:809px;top:731px" width="30" height="31" viewBox="0 0 30 31"><g stroke="#8E9BFA" stroke-width="3" fill="none" stroke-linecap="round"><circle cx="7.7" cy="7.6" r="5.5"/><circle cx="22.2" cy="23.4" r="5.5"/><path d="M24.3 2.5 L4.3 28.2"/></g></svg>
  <div class="a rb" style="left:382.5px;top:785px;width:458px"><div class="rbi"><div class="pl" style="color:#DC3838"><svg class="arw" width="10" height="18" viewBox="0 0 10 18"><g stroke="#DC3838" stroke-width="2" fill="none" stroke-linecap="round" stroke-linejoin="round"><path d="M5 1 V16 M1 12 L5 16.2 L9 12"/></g></svg><span class="m" style="-webkit-text-stroke:0.5px currentColor">-86.83%</span></div><div class="sv">-55.60</div></div></div>
  <div class="a card" style="left:882.5px;top:706px;width:475.5px;height:160px"></div>
  <div class="t s" style="left:900.0px;top:734.5px;font-size:19.5px;color:#7A8496">Impressions</div>
  <div class="t" style="left:900.0px;top:809px;font-size:33.2px;font-weight:400;-webkit-text-stroke:0.75px #334155;color:#334155;letter-spacing:0.4px">1.38K</div>
  <svg style="left:1306.5px;top:729px" width="35" height="33" viewBox="0 0 35 33"><g stroke="#EFC75E" stroke-width="2.8" fill="none" stroke-linecap="round" stroke-linejoin="round"><rect x="1.6" y="1.6" width="31.8" height="29.8" rx="4"/><path d="M7 14.2 H10 L13.5 20 L19 7.7 L22.8 16 H27.5"/></g><path d="M1.6 23.4 H33.4 V27.4 a4 4 0 0 1 -4 4 H5.6 a4 4 0 0 1 -4 -4 Z" fill="#EFC75E" stroke="none"/><rect x="4.6" y="26.9" width="26" height="3.1" rx="1.55" fill="#fff"/></svg>
  <div class="a rb" style="left:882.5px;top:785px;width:458px"><div class="rbi"><div class="pl" style="color:#3A8E5B"><svg class="arw" width="10" height="18" viewBox="0 0 10 18"><g stroke="#3A8E5B" stroke-width="2" fill="none" stroke-linecap="round" stroke-linejoin="round"><path d="M5 17 V2 M1 6 L5 1.8 L9 6"/></g></svg><span class="m" style="-webkit-text-stroke:0.5px currentColor">229.57%</span></div><div class="sv">961.88</div></div></div>
  <div class="a card" style="left:1382.5px;top:706px;width:475.5px;height:160px"></div>
  <div class="t s" style="left:1400.0px;top:734.5px;font-size:19.5px;color:#7A8496">Reach</div>
  <div class="t" style="left:1400.0px;top:809px;font-size:33.2px;font-weight:400;-webkit-text-stroke:0.75px #334155;color:#334155;letter-spacing:0.4px">1.36K</div>
  <svg style="left:1807px;top:729px" width="33" height="33" viewBox="0 0 33 33"><g stroke="#D4B71E" stroke-width="1.9" fill="none"><circle cx="5" cy="5" r="3.6"/><circle cx="27.5" cy="5" r="3.6"/><circle cx="5" cy="27.8" r="3.6"/><circle cx="27.5" cy="27.8" r="3.6"/><circle cx="16.3" cy="16.3" r="7.8"/><circle cx="16.3" cy="13.3" r="3"/><path d="M10.6 21.5 C12 18.8 14 17.6 16.3 17.6 C18.6 17.6 20.6 18.8 22 21.5"/><path d="M7.6 7.6 L10.6 10.6 M24.9 7.6 L22 10.6 M7.6 25.2 L10.6 22.2 M24.9 25.2 L22 22.2"/></g></svg>
  <div class="a rb" style="left:1382.5px;top:785px;width:458px"><div class="rbi"><div class="pl" style="color:#3A8E5B"><svg class="arw" width="10" height="18" viewBox="0 0 10 18"><g stroke="#3A8E5B" stroke-width="2" fill="none" stroke-linecap="round" stroke-linejoin="round"><path d="M5 17 V2 M1 6 L5 1.8 L9 6"/></g></svg><span class="m" style="-webkit-text-stroke:0.5px currentColor">275.03%</span></div><div class="sv">963.63</div></div></div>
</div>

  <!-- bottom card -->
  <div class="a" style="left:382.5px;top:907px;width:1475.5px;height:99px;border-radius:9px 9px 0 0;background:#fff"></div>
  <div class="a" style="left:411px;top:936.5px;width:505px;height:52.5px;border-radius:9px;background:#FAFAFA;border:1px solid #E6E6E6"></div>
  <div class="t m" style="left:440px;top:950.5px;font-size:23.9px;color:#3A3A3A;-webkit-text-stroke:0.5px #3A3A3A">Publishing Behaviour By Engagements</div>
  <svg style="left:866px;top:956px" width="22" height="15" viewBox="0 0 22 15"><path d="M2.5 3 L11 11.5 L19.5 3" stroke="#8A8A8A" stroke-width="2" fill="none" stroke-linecap="round" stroke-linejoin="round"/></svg>
  <svg style="left:926px;top:951px" width="21" height="21" viewBox="0 0 21 21"><circle cx="10.5" cy="10.5" r="8.8" stroke="#333" stroke-width="2" fill="none"/><path d="M7.8 8.2 C7.8 6.5 9 5.5 10.5 5.5 C12 5.5 13.2 6.5 13.2 8 C13.2 9.8 10.6 10 10.6 12.3" stroke="#333" stroke-width="2" fill="none" stroke-linecap="round"/><circle cx="10.6" cy="15.2" r="1.2" fill="#333"/></svg>
</div>

<!-- OVERLAYS -->
<div id="overlays">
  <!-- bottom-right container corner mask -->
  <svg style="left:1881px;top:992px" width="14" height="14" viewBox="0 0 14 14"><path d="M14 0 V14 H0 A14 14 0 0 0 14 0 Z" fill="#EDF4FD"/></svg>
  <!-- bot -->
  <div class="a" style="left:1771.5px;top:788.5px;width:89px;height:89px;border-radius:50%;background:#2E70F6;box-shadow:0 4px 14px rgba(40,80,160,0.08)"></div>
  <svg style="left:0;top:0" width="1920" height="1080" viewBox="0 0 1920 1080"><g stroke="#fff" stroke-width="2.4" fill="none" stroke-linecap="round" stroke-linejoin="round">
    <circle cx="1815.6" cy="809.8" r="3.4"/><path d="M1815.6 813.2 V821.7"/>
    <path d="M1799.8 821.7 H1831.8 Q1836.8 821.7 1836.8 826.7 V845.5 Q1836.8 850.5 1831.8 850.5 H1809 L1800.3 858.3 V850.5 Q1794.8 850.5 1794.8 845.5 V826.7 Q1794.8 821.7 1799.8 821.7 Z"/>
    <path d="M1791.3 828.8 Q1787.6 828.8 1787.6 832 V836.6 Q1787.6 839.8 1791.3 839.8"/><path d="M1840.3 828.8 Q1844 828.8 1844 832 V836.6 Q1844 839.8 1840.3 839.8"/>
    <circle cx="1804" cy="833.4" r="3"/><circle cx="1825" cy="833.4" r="3"/><path d="M1810 840.3 Q1814.5 843.9 1819.5 840.3"/></g></svg>
  <!-- help -->
  <div class="a" style="left:1771.5px;top:890.5px;width:89px;height:89px;border-radius:50%;background:#354F70;box-shadow:0 4px 14px rgba(40,60,100,0.08)"></div>
  <svg style="left:0;top:0" width="1920" height="1080" viewBox="0 0 1920 1080"><path d="M1809.6 931.6 C1809.6 927.6 1812.4 925.4 1816.1 925.4 C1820 925.4 1822.7 927.8 1822.7 931.1 C1822.7 935.6 1816.3 935.9 1816.3 939.6" stroke="#fff" stroke-width="4.6" fill="none" stroke-linecap="round" stroke-linejoin="round"/><circle cx="1816.2" cy="945.4" r="2.9" fill="#fff"/></svg>
  <!-- top arrow -->
  <svg style="left:0;top:0" width="1920" height="1080" viewBox="0 0 1920 1080">
    <path d="M1142.6 14.1 L1140.5 13.4 L1138.3 12.8 L1136.1 12.4 L1134.0 12.0 L1131.8 11.8 L1129.5 11.6 L1127.3 11.6 L1125.1 11.7 L1122.9 11.9 L1120.7 12.1 L1118.4 12.5 L1116.2 13.0 L1114.1 13.5 L1111.9 14.2 L1109.7 14.9 L1107.6 15.8 L1105.5 16.7 L1103.5 17.7 L1101.4 18.8 L1099.5 20.0 L1097.5 21.2 L1095.6 22.6 L1093.8 24.0 L1092.0 25.5 L1090.2 27.1 L1088.5 28.7 L1086.9 30.5 L1085.4 32.3 L1083.9 34.2 L1082.5 36.1 L1081.2 38.1 L1079.9 40.2 L1078.8 42.4 L1077.7 44.6 L1076.7 46.9 L1075.8 49.2 L1075.0 51.6 L1074.3 54.1 L1073.7 56.6 L1077.9 57.4 L1078.3 55.0 L1078.9 52.7 L1079.6 50.5 L1080.3 48.3 L1081.2 46.1 L1082.1 44.0 L1083.2 42.0 L1084.3 40.0 L1085.5 38.1 L1086.7 36.2 L1088.1 34.4 L1089.5 32.7 L1090.9 31.0 L1092.5 29.4 L1094.0 27.8 L1095.7 26.3 L1097.4 24.9 L1099.2 23.6 L1101.0 22.3 L1102.8 21.1 L1104.7 20.0 L1106.6 19.0 L1108.6 18.0 L1110.6 17.1 L1112.6 16.3 L1114.7 15.6 L1116.8 15.0 L1118.8 14.4 L1121.0 14.0 L1123.1 13.6 L1125.2 13.3 L1127.4 13.2 L1129.5 13.1 L1131.7 13.1 L1133.8 13.2 L1136.0 13.4 L1138.1 13.7 L1140.3 14.1 L1142.4 14.5 Z" fill="#FF7420"/>
    <path d="M1069 42 L1075.4 58.5 L1089.4 48.2" fill="none" stroke="#FF7420" stroke-width="4.6" stroke-linecap="round" stroke-linejoin="round"/>
  <!-- bottom arrow -->
    <path d="M206.5 1032.5 L209.1 1032.4 L211.6 1032.1 L214.1 1031.7 L216.5 1031.2 L218.9 1030.7 L221.3 1030.1 L223.6 1029.3 L225.8 1028.6 L228.0 1027.7 L230.1 1026.8 L232.2 1025.8 L234.2 1024.7 L236.2 1023.5 L238.1 1022.3 L239.9 1021.0 L241.7 1019.6 L243.5 1018.2 L245.1 1016.7 L246.7 1015.2 L248.3 1013.6 L249.8 1011.9 L251.2 1010.2 L252.5 1008.4 L253.8 1006.5 L255.1 1004.6 L256.2 1002.7 L257.3 1000.7 L258.3 998.6 L259.2 996.5 L260.1 994.4 L260.9 992.2 L261.6 989.9 L262.2 987.6 L262.8 985.3 L263.3 982.9 L263.7 980.5 L264.1 978.1 L264.3 975.6 L264.5 973.1 L260.1 972.9 L260.0 975.3 L259.8 977.6 L259.6 979.9 L259.3 982.2 L258.9 984.5 L258.4 986.7 L257.9 988.9 L257.3 991.0 L256.6 993.1 L255.8 995.1 L255.0 997.2 L254.1 999.1 L253.2 1001.1 L252.2 1002.9 L251.1 1004.8 L250.0 1006.6 L248.7 1008.3 L247.5 1010.0 L246.1 1011.6 L244.7 1013.2 L243.2 1014.8 L241.7 1016.3 L240.1 1017.7 L238.5 1019.1 L236.7 1020.4 L235.0 1021.6 L233.1 1022.8 L231.2 1024.0 L229.3 1025.0 L227.2 1026.0 L225.2 1027.0 L223.0 1027.8 L220.8 1028.6 L218.6 1029.4 L216.3 1030.1 L213.9 1030.7 L211.5 1031.2 L209.0 1031.7 L206.5 1032.1 Z" fill="#FF7420"/>
    <path d="M250.8 985.6 L262.2 971.3 L272.8 986.5" fill="none" stroke="#FF7420" stroke-width="4.6" stroke-linecap="round" stroke-linejoin="round"/>
  </svg>
</div>

</body></html>
